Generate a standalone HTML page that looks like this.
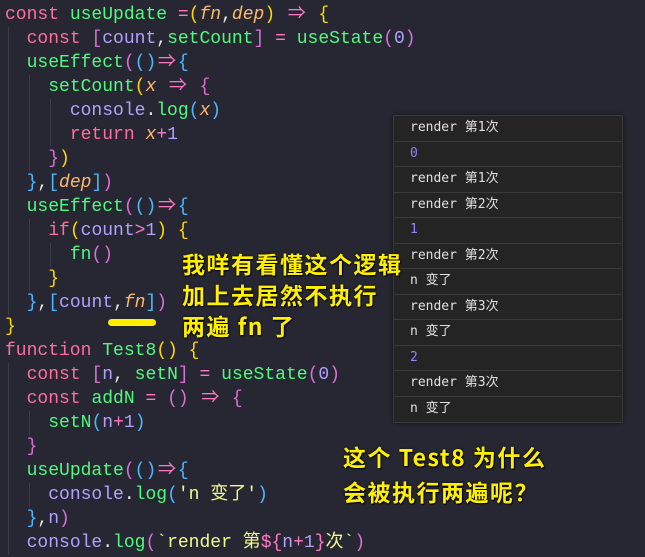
<!DOCTYPE html>
<html><head><meta charset="utf-8"><style>
body{margin:0;width:645px;height:557px;background:#262733;overflow:hidden;position:relative}
.code{position:absolute;left:5px;top:3px;font:18px/24px "Liberation Mono","Noto Sans CJK SC",monospace;color:#e8e8e8;white-space:pre}
.k{color:#ff6e9c}.f{color:#50fa7b}.v{color:#b4a0ff}.o{color:#ffb86c;font-style:italic}
.y{color:#ffd700}.p{color:#da70d6}.b{color:#4fb7ff}.op{color:#ff79c6}.s{color:#f1fa8c}
.ar{display:inline-block;width:2ch;text-align:center;color:#ff79c6}
.g{position:absolute;width:1px;background:#3c3e4c}
.con{position:absolute;left:393px;top:115px;width:228px;height:306px;background:#242424;border:1px solid #3a3a3a;box-shadow:0 0 4px #111;font:13px "DejaVu Sans Mono","Noto Sans CJK SC",monospace;color:#e0e0e0}
.con div{height:24.5px;line-height:24.5px;border-bottom:1px solid #3a3a3a;padding-left:16px}
.con .n{color:#9980ff}
.note{position:absolute;font:bold 23px/31px "Noto Sans CJK SC",sans-serif;color:#ffef00;letter-spacing:1.5px;text-shadow:0 0 2px #000,1px 1px 1px #000}
</style></head><body>
<div class="g" style="left:8px;top:27px;height:288px"></div>
<div class="g" style="left:29px;top:75px;height:96px"></div>
<div class="g" style="left:29px;top:219px;height:72px"></div>
<div class="g" style="left:50px;top:99px;height:48px"></div>
<div class="g" style="left:50px;top:243px;height:24px"></div>
<div class="g" style="left:8px;top:363px;height:192px"></div>
<div class="g" style="left:29px;top:411px;height:24px"></div>
<div class="g" style="left:29px;top:483px;height:24px"></div>
<div class="code"><span class="k">const</span> <span class="f">useUpdate</span> <span class="op">=</span><span class="y">(</span><span class="o">fn</span>,<span class="o">dep</span><span class="y">)</span> <span class="ar">⇒</span> <span class="y">{</span>
  <span class="k">const</span> <span class="p">[</span><span class="v">count</span>,<span class="f">setCount</span><span class="p">]</span> <span class="op">=</span> <span class="f">useState</span><span class="p">(</span><span class="v">0</span><span class="p">)</span>
  <span class="f">useEffect</span><span class="p">(</span><span class="b">()</span><span class="ar">⇒</span><span class="b">{</span>
    <span class="f">setCount</span><span class="y">(</span><span class="o">x</span> <span class="ar">⇒</span> <span class="p">{</span>
      <span class="v">console</span>.<span class="f">log</span><span class="b">(</span><span class="o">x</span><span class="b">)</span>
      <span class="k">return</span> <span class="o">x</span><span class="op">+</span><span class="v">1</span>
    <span class="p">}</span><span class="y">)</span>
  <span class="b">}</span>,<span class="b">[</span><span class="o">dep</span><span class="b">]</span><span class="p">)</span>
  <span class="f">useEffect</span><span class="p">(</span><span class="b">()</span><span class="ar">⇒</span><span class="b">{</span>
    <span class="k">if</span><span class="y">(</span><span class="v">count</span><span class="op">&gt;</span><span class="v">1</span><span class="y">)</span> <span class="y">{</span>
      <span class="f">fn</span><span class="p">()</span>
    <span class="y">}</span>
  <span class="b">}</span>,<span class="b">[</span><span class="v">count</span>,<span class="o">fn</span><span class="b">]</span><span class="p">)</span>
<span class="y">}</span>
<span class="k">function</span> <span class="f">Test8</span><span class="y">()</span> <span class="y">{</span>
  <span class="k">const</span> <span class="p">[</span><span class="v">n</span>, <span class="f">setN</span><span class="p">]</span> <span class="op">=</span> <span class="f">useState</span><span class="p">(</span><span class="v">0</span><span class="p">)</span>
  <span class="k">const</span> <span class="f">addN</span> <span class="op">=</span> <span class="p">()</span> <span class="ar">⇒</span> <span class="p">{</span>
    <span class="f">setN</span><span class="b">(</span><span class="v">n</span><span class="op">+</span><span class="v">1</span><span class="b">)</span>
  <span class="p">}</span>
  <span class="f">useUpdate</span><span class="p">(</span><span class="b">()</span><span class="ar">⇒</span><span class="b">{</span>
    <span class="v">console</span>.<span class="f">log</span><span class="b">(</span><span class="s">'n 变了'</span><span class="b">)</span>
  <span class="b">}</span>,<span class="v">n</span><span class="p">)</span>
  <span class="v">console</span>.<span class="f">log</span><span class="p">(</span><span class="s">`render 第</span><span class="op">${</span><span class="v">n</span><span class="op">+</span><span class="v">1</span><span class="op">}</span><span class="s">次`</span><span class="p">)</span></div>
<div style="position:absolute;left:108px;top:319px;width:48px;height:7px;border-radius:4px;background:#ffef00"></div>
<div class="con">
<div>render 第1次</div><div class="n">0</div><div>render 第1次</div><div>render 第2次</div><div class="n">1</div><div>render 第2次</div><div>n 变了</div><div>render 第3次</div><div>n 变了</div><div class="n">2</div><div>render 第3次</div><div style="border:none">n 变了</div>
</div>
<div class="note" style="left:182px;top:248px">我咩有看懂这个逻辑<br>加上去居然不执行<br>两遍 fn 了</div>
<div class="note" style="left:343px;top:439px;line-height:35px">这个 Test8 为什么<br>会被执行两遍呢？</div>
</body></html>
